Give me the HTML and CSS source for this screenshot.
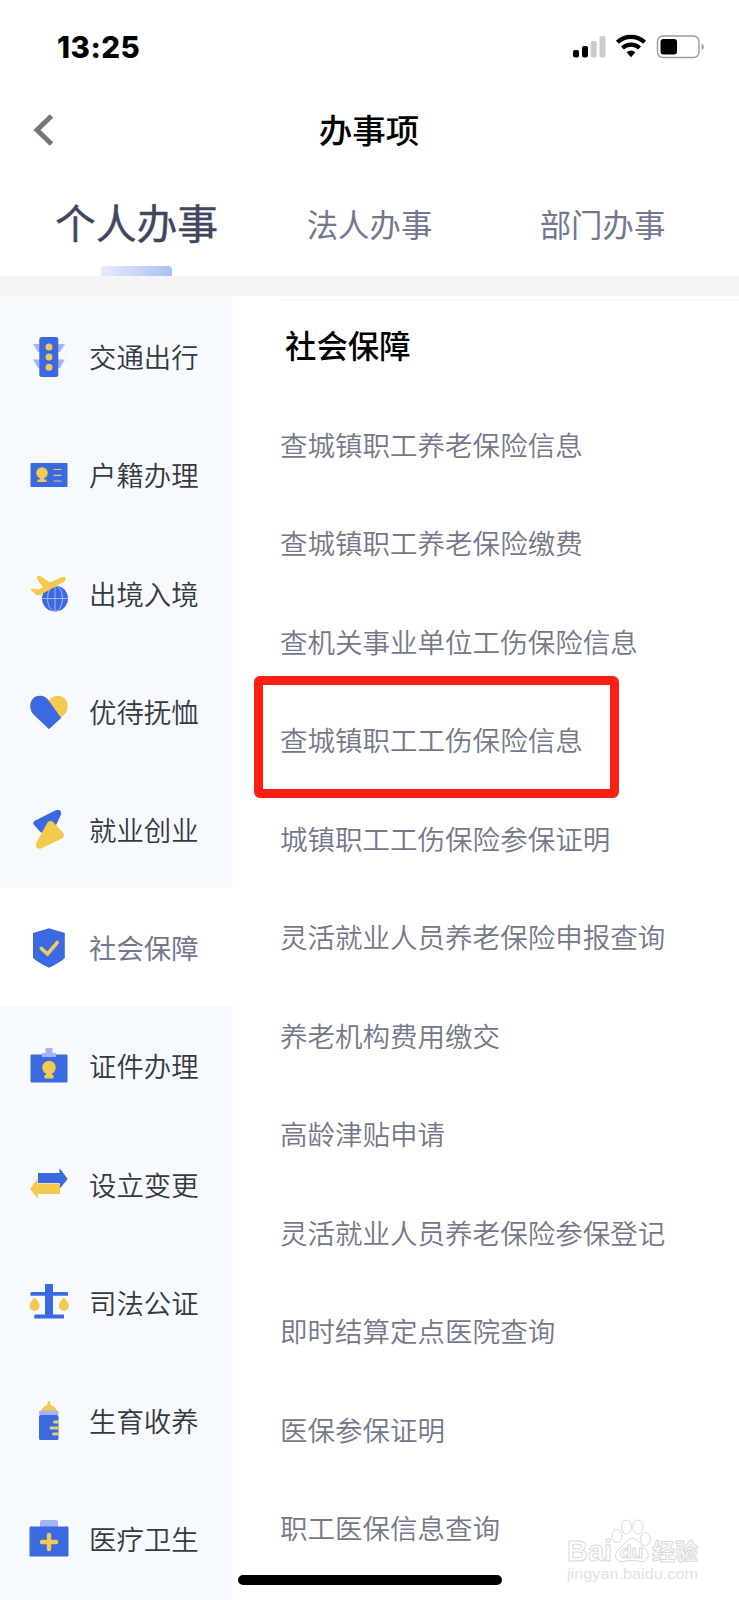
FILE: index.html
```html
<!DOCTYPE html>
<html lang="zh-CN">
<head>
<meta charset="utf-8">
<title>办事项</title>
<link rel="stylesheet" href="styles.css">
</head>
<body>
<div class="phone">
  <header class="status">
    <span class="clock">13:25</span>
    <svg class="status-icons" width="134" height="26" viewBox="0 0 134 26">
      <rect x="1" y="16" width="6" height="7.4" rx="1.8"/>
      <rect x="10" y="12" width="6" height="11.4" rx="1.8"/>
      <g fill="#cbcbcb"><rect x="18.7" y="7" width="6" height="16.4" rx="1.8"/><rect x="27.5" y="2" width="6" height="21.4" rx="1.8"/></g>
      <g fill="none" stroke="#000" stroke-width="4.2"><path d="M45.4 8.2A20 20 0 0 1 72.6 8.2"/><path d="M50.4 14A12.8 12.8 0 0 1 67.6 14"/></g>
      <path d="M54.6 18.2Q59 14.6 63.4 18.2L59 23.2Z"/>
      <rect x="85.5" y="2" width="41.5" height="21.5" rx="5.5" fill="none" stroke="#9b9b9b" stroke-width="1.4"/>
      <rect x="88.5" y="5" width="16.5" height="15.5" rx="3"/>
      <path d="M129.7 9.5q2.2 1.2 2.2 3.4t-2.2 3.4z" fill="#9b9b9b"/>
    </svg>
  </header>

  <nav class="titlebar">
    <svg class="back" width="20" height="32" viewBox="0 0 20 32"><path d="M18.500 2L4 16L18.500 30" fill="none" stroke="#777" stroke-width="5"/></svg>
    <h1>办事项</h1>
  </nav>

  <div class="tabs">
    <span class="tab tab-on">个人办事</span>
    <span class="tab">法人办事</span>
    <span class="tab">部门办事</span>
  </div>

  <main class="body">
    <aside class="side">
      <div class="cat"><svg viewBox="0 0 40 40"><path d="M4 7H36L31 15H9ZM4 22.500H36L31 31H9Z" fill="#a5b4f3"/><rect x="10.300" y="0" width="19" height="40" rx="2.500" fill="#3b69df"/><g fill="#f0c75b"><circle cx="20" cy="10" r="3.500"/><circle cx="20" cy="20" r="3.500"/><circle cx="20" cy="30.200" r="3.500"/></g></svg><span>交通出行</span></div>
      <div class="cat"><svg viewBox="0 0 40 40"><rect x="1.500" y="8" width="37" height="24" rx="1" fill="#3b69df"/><g fill="#f3ca4f"><circle cx="13" cy="18" r="5.800"/><path d="M11 22h4v2.500h2.500v2.500h-9v-2.500H11z"/></g><path d="M24.500 14.500h8M24.500 20.300h8M24.500 26h8" stroke="#e9c877" stroke-width="1.200"/></svg><span>户籍办理</span></div>
      <div class="cat"><svg viewBox="0 0 40 40"><circle cx="26" cy="24.500" r="13" fill="#3b69df"/><g fill="none" stroke="#a9bff6" stroke-width=".9"><path d="M13 24.500h26M26 11.500v26"/><ellipse cx="26" cy="24.500" rx="7.500" ry="13"/></g><path d="M8.500 2.200Q10 1.300 12 2.500L21 8.300 33.500 2.900Q36.500 2.200 37 4.500 37 6.500 34.500 8L23 14.500 11.500 20.800Q9 22 7.200 20.800L2 16.200Q1.300 14.400 3.500 14.600L10.500 15.500 13.700 13 7.500 4Q7.300 2.800 8.500 2.200z" fill="#f3ca4f"/></svg><span>出境入境</span></div>
      <div class="cat"><svg viewBox="0 0 40 40"><path d="M20 37L4.500 22.500C-1.500 16 1 3.700 11.500 3.700q4.600 0 8.500 4.500 3.900-4.500 8.500-4.500C39 3.700 41.500 16 35.500 22.500z" fill="#f3ca4f"/><path d="M20 37L4.500 22.500C-1.500 16 1 3.700 11 3.700q5.500 0 9 5.300l12.200 17z" fill="#3b69df"/></svg><span>优待抚恤</span></div>
      <div class="cat"><svg viewBox="0 0 40 40"><path d="M6.800 13L28.500 2.200Q29.800 2 29.500 4L22 20H13z" fill="#3b69df" stroke="#3b69df" stroke-width="5" stroke-linejoin="round"/><path d="M22 13.500L32.300 24.500Q32.800 25.500 31.500 26.500L11 36.200Q8.800 36.500 9.300 34.500L20.500 14Q21.300 13 22 13.500z" fill="#f3ca4f" stroke="#f3ca4f" stroke-width="5" stroke-linejoin="round"/></svg><span>就业创业</span></div>
      <div class="cat cat-on"><svg viewBox="0 0 40 40"><path d="M20 0.200L35.800 5V29.500Q34 33 20 39.800Q6 33 4 29.500V5z" fill="#3b69df"/><path d="M12.300 20.300L18.500 26L28.300 14.500" fill="none" stroke="#f0cb61" stroke-width="3.600" stroke-linecap="round"/></svg><span>社会保障</span></div>
      <div class="cat"><svg viewBox="0 0 40 40"><rect x="1.500" y="8.500" width="37" height="28" rx="1" fill="#3b69df"/><path d="M16.500 2h7v5h3.500v4H13V7h3.500z" fill="#a5b4f3"/><g fill="#f3ca4f"><circle cx="20" cy="21.500" r="6.800"/><path d="M17 26h6v3h1.500v3.500h-9V29H17z"/></g></svg><span>证件办理</span></div>
      <div class="cat"><svg viewBox="0 0 40 40"><path d="M9 8H30.500V3L38.700 14L30.500 24V18H9z" fill="#3b69df"/><path d="M8.500 13.500V18.500H31V29H9V34L1 24z" fill="#f3ca4f"/></svg><span>设立变更</span></div>
      <div class="cat"><svg viewBox="0 0 40 40"><path d="M5.500 14.500q5 5 5 8.500a5 5 0 0 1-10 0q0-3.500 5-8.500zM34.800 14.500q5 5 5 8.500a5 5 0 0 1-10 0q0-3.500 5-8.500z" fill="#f3ca4f"/><path d="M17 1h6q1 0 1 1v7h14q1 0 1 1v2.700H24V31.500h10q1 0 1 1v3H5.300v-3q0-1 1-1H16V12.700H1.500V10q0-1 1-1H16V2q0-1 1-1z" fill="#3b69df"/></svg><span>司法公证</span></div>
      <div class="cat"><svg viewBox="0 0 40 40"><path d="M18.500 1.500q0-1.500 1.500-1.500t1.500 1.500V4q5 1 6.500 6.500H12Q13.500 5 18.500 4z" fill="#f3ca4f"/><rect x="10" y="9.500" width="19.500" height="4.500" rx="1.500" fill="#a5b4f3"/><rect x="10" y="14" width="19.500" height="25" rx="1.500" fill="#3b69df"/><path d="M25.500 19.500h4v3h-4a1.500 1.500 0 0 1 0-3zM22 25.500h7.500v3H22a1.500 1.500 0 0 1 0-3zM24.500 31.500h5v3h-5a1.500 1.500 0 0 1 0-3z" fill="#e9cb7f"/></svg><span>生育收养</span></div>
      <div class="cat"><svg viewBox="0 0 40 40"><path d="M11 8V3q0-2 2-2h14q2 0 2 2v5z" fill="#a5b4f3"/><rect x=".5" y="7.500" width="39" height="30" rx="1.200" fill="#3b69df"/><path d="M20 16v14M13 23h14" stroke="#f3ca4f" stroke-width="4.400" stroke-linecap="round"/></svg><span>医疗卫生</span></div>
    </aside>

    <section class="content">
      <h2>社会保障</h2>
      <ul class="items">
        <li>查城镇职工养老保险信息</li>
        <li>查城镇职工养老保险缴费</li>
        <li>查机关事业单位工伤保险信息</li>
        <li class="marked">查城镇职工工伤保险信息</li>
        <li>城镇职工工伤保险参保证明</li>
        <li>灵活就业人员养老保险申报查询</li>
        <li>养老机构费用缴交</li>
        <li>高龄津贴申请</li>
        <li>灵活就业人员养老保险参保登记</li>
        <li>即时结算定点医院查询</li>
        <li>医保参保证明</li>
        <li>职工医保信息查询</li>
      </ul>
    </section>
  </main>

  <div class="home-bar"></div>
  <svg class="watermark" width="140" height="70" viewBox="0 0 140 70">
    <g fill="#fff" stroke="#d9d9d9" stroke-width="1">
      <text class="wm-logo" x="5" y="45" textLength="45" lengthAdjust="spacingAndGlyphs">Bai</text>
      <ellipse cx="55" cy="20" rx="5" ry="6.500"/><ellipse cx="64.500" cy="11" rx="5" ry="7"/><ellipse cx="76" cy="11" rx="5" ry="7"/><ellipse cx="83.500" cy="23" rx="5" ry="6.500"/>
      <path d="M70 22q4 0 8 5l6 7q4 5 1 9t-9 2q-6-1-12 0-8 2-10-3-2-4 3-9l6-6q4-5 7-5z"/>
      <text class="wm-du" x="58" y="42">du</text>
      <text class="wm-cn" x="90" y="44">经验</text>
    </g>
    <text class="wm-url" x="5" y="63" textLength="131" lengthAdjust="spacingAndGlyphs">jingyan.baidu.com</text>
  </svg>
</div>
</body>
</html>
```
FILE: styles.css
```css
*, *::before, *::after { box-sizing: border-box; margin: 0; padding: 0; }
body { background: #fff; font-family: "Noto Sans CJK SC", sans-serif; }
.phone { position: relative; width: 739px; height: 1600px; overflow: hidden; display: flex; flex-direction: column; }

.status { height: 94px; padding: 0 33px 0 57px; display: flex; align-items: center; justify-content: space-between; flex: none; }
.clock { font: 800 29.5px/34px Inter, sans-serif; letter-spacing: 0.5px; }

.titlebar { height: 71px; display: grid; grid-template-columns: 1fr auto 1fr; align-items: center; padding: 0 34px 0 33px; flex: none; }
.titlebar h1 { font-size: 33.5px; font-weight: 500; line-height: 50px; color: #000; margin-top: -2px; }

.tabs { height: 111px; display: flex; align-items: stretch; flex: none; padding-left: 19px; }
.tab { width: 233px; display: flex; align-items: center; justify-content: center; font-size: 31.4px; color: #74788e; line-height: 50px; padding: 6px 2px 0 0; }
.tab-on { flex-direction: column; justify-content: flex-end; font-size: 40.8px; color: #42455f; line-height: 60px; -webkit-text-stroke: 0.4px #42455f; }
.tab-on::after { content: ""; width: 71px; height: 10px; margin-top: 14px; border-radius: 4px 4px 0 0; background: linear-gradient(100deg, #e6ecfc, #a9c0f5); }
.tab:first-child { width: 235px; padding-right: 0; }

.body { flex: 1; display: flex; border-top: 20px solid #f5f5f8; min-height: 0; }
.side { width: 232px; background: #f6f9fe; flex: none; overflow: hidden; }
.cat { height: 118.22px; padding-left: 29px; display: flex; align-items: center; gap: 20px; font-size: 27.4px; font-weight: 350; color: #36393e; line-height: 40px; }
.cat:first-child { margin-top: 1px; }
.cat svg { width: 40px; height: 40px; margin-top: 2px; flex: none; }
.cat-on { background: #fff; color: #74788e; font-weight: 400; }

.content { flex: 1; padding-left: 48px; padding-top: 3px; }
.content h2 { height: 95.6px; padding: 21px 0 0 5px; border-top: 2px solid #f7f7f8; font-size: 31.4px; font-weight: 500; line-height: 46px; color: #000; }
.items { list-style: none; }
.items li { position: relative; height: 98.5px; display: flex; align-items: center; font-size: 27.52px; font-weight: 350; line-height: 40px; color: #74788a; white-space: nowrap; }
.items .marked::after { content: ""; position: absolute; left: -26.500px; top: -14.500px; width: 365px; height: 122px; border: 9px solid #fb2013; border-radius: 6px; }

.home-bar { position: absolute; left: 238px; top: 1575px; width: 264px; height: 10px; border-radius: 5px; background: #000; }
.watermark { position: absolute; left: 562px; top: 1516px; }
.wm-logo { font: 700 29px "Liberation Sans", sans-serif; }
.wm-du { font: 700 19px "Liberation Sans", sans-serif; }
.wm-cn { font: 700 23px "Noto Sans CJK SC", sans-serif; }
.wm-url { font: 15.5px "Liberation Sans", sans-serif; fill: #e2e2e2; }
```
